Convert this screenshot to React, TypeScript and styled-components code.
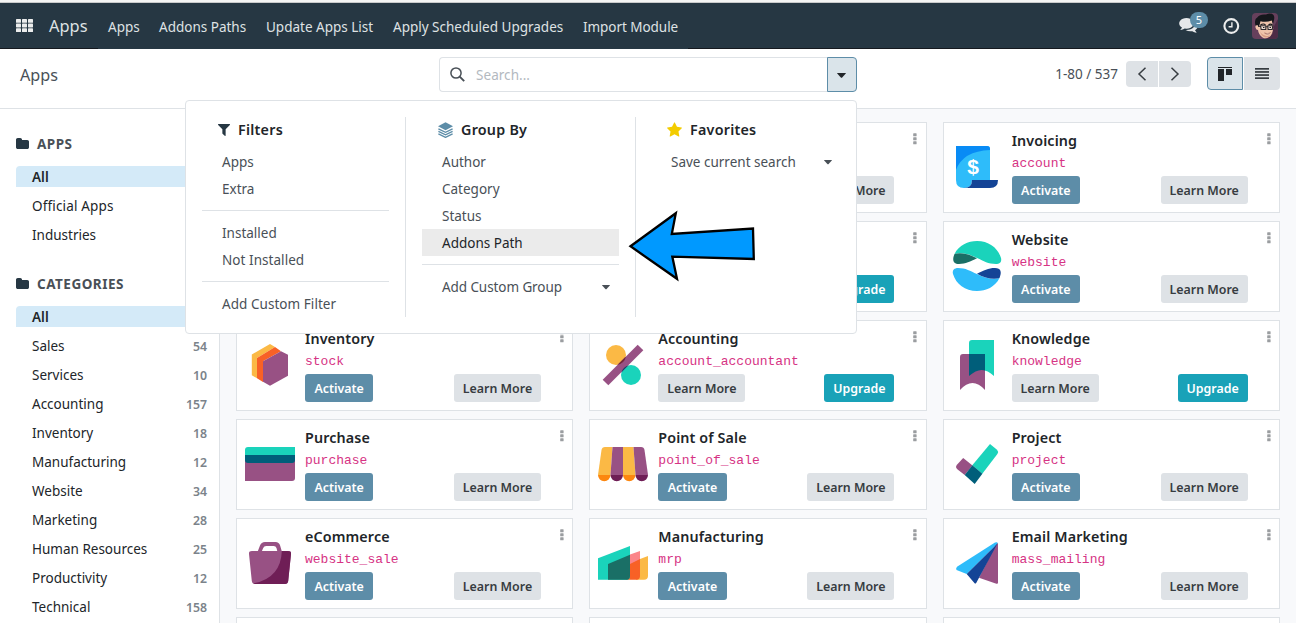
import React from "react";
import styled, { createGlobalStyle, css } from "styled-components";

const Global = createGlobalStyle`
  * { box-sizing: border-box; }
  body {
    margin: 0;
    overflow: hidden;
    background: #fff;
    color: #212529;
    font-family: "Noto Sans", "Open Sans", sans-serif;
    font-size: 13.5px;
    line-height: 21px;
  }
  svg { display: block; flex: none; }
`;

const Page = styled.div`
  position: relative;
  display: flex;
  flex-direction: column;
  height: 623px;
  overflow: hidden;
`;

const WindowEdge = styled.div`
  height: 3px;
  flex: none;
  background: #f4f4f4;
  border-bottom: 1px solid #c9cacb;
`;

/* A run of text that takes a set width, with its own letter spacing. */
const Label = styled.span<{ $w?: number; $track?: number }>`
  display: inline-block;
  white-space: nowrap;
  ${(p) => p.$w !== undefined && css`width: ${p.$w}px;`}
  letter-spacing: ${(p) => p.$track ?? 0}px;
`;

/* ---------- Top bar ---------- */

const Navbar = styled.nav`
  display: flex;
  flex: none;
  align-items: center;
  height: 46px;
  padding: 0 18px 0 16px;
  color: #dfe2e4;
  background:
    linear-gradient(#15191f, #15191f) 0 100% / 98px 1px no-repeat,
    linear-gradient(#15191f, #15191f) 688px 100% / 608px 1px no-repeat,
    #263743;
`;

const Brand = styled.div`
  width: 59px;
  margin-left: 16px;
  padding-bottom: 1px;
  font-size: 16.4px;
  line-height: 24px;
`;

const NavLinks = styled.div`
  display: flex;
  gap: 20px;
  padding-top: 3px;
`;

const Systray = styled.div`
  display: flex;
  align-items: center;
  margin-left: auto;
`;

const ChatButton = styled.div`
  position: relative;
  width: 44px;
`;

const Badge = styled.span`
  position: absolute;
  top: -6px;
  left: 11px;
  width: 18px;
  height: 16px;
  border-radius: 8px;
  background: #5d8da8;
  color: #fff;
  font-size: 11px;
  line-height: 16px;
  text-align: center;
`;

const ClockSlot = styled.div`
  width: 29px;
`;

/* ---------- Control panel ---------- */

const ControlPanel = styled.header`
  display: flex;
  flex: none;
  align-items: flex-start;
  height: 60px;
  padding: 8px 16px 0 20px;
  border-bottom: 1px solid #dee2e6;
  background: #fff;
  color: #495057;
`;

const Breadcrumb = styled.div`
  width: 419px;
  padding-top: 7px;
  font-size: 16.2px;
  line-height: 22px;
`;

const SearchBox = styled.div`
  display: flex;
  width: 418px;
  height: 35px;
`;

const SearchInput = styled.div`
  display: flex;
  flex: 1;
  align-items: center;
  gap: 11px;
  padding-left: 10px;
  border: 1px solid #dee2e6;
  border-right: 0;
  border-radius: 4px 0 0 4px;
  color: #b3b9bf;

  span { padding-top: 2px; }
`;

const SearchToggle = styled.div`
  display: flex;
  align-items: center;
  justify-content: center;
  width: 30px;
  padding: 1px 1px 0 0;
  border: 1px solid #5d8da8;
  border-radius: 0 4px 4px 0;
  background: #dae4ea;
`;

const Pager = styled.div`
  display: flex;
  align-items: center;
  margin: 4px 16px 0 auto;
  height: 26px;
`;

const PagerButton = styled.div<{ $side: "left" | "right" }>`
  display: flex;
  align-items: center;
  justify-content: center;
  width: 32px;
  height: 26px;
  background: #dee2e6;
  ${(p) =>
    p.$side === "left"
      ? css`margin: 0 1px 0 8px; border-radius: 4px 0 0 4px;`
      : css`border-radius: 0 4px 4px 0;`}
`;

const ViewButton = styled.div<{ $active?: boolean }>`
  display: flex;
  align-items: center;
  justify-content: center;
  width: 36px;
  height: 33px;
  background: #dee2e6;
  border-radius: 0 4px 4px 0;
  ${(p) =>
    p.$active &&
    css`
      margin-right: 1px;
      border: 1px solid #5d8da8;
      border-radius: 4px 0 0 4px;
      background: #dae4ea;
    `}
`;

/* ---------- Body ---------- */

const Body = styled.main`
  display: flex;
  flex: 1;
  min-height: 0;
  background: #f8f9fb;
`;

const Sidebar = styled.aside`
  flex: none;
  width: 220px;
  overflow: hidden;
  padding: 25px 0 0 16px;
  border-right: 1px solid #dee2e6;
  background: #fff;
`;

const SidebarSection = styled.section`
  margin-bottom: 29px;
`;

const SectionTitle = styled.h2`
  display: flex;
  align-items: center;
  gap: 8px;
  height: 20px;
  margin: 0 0 12px;
  padding-bottom: 1px;
  color: #495057;
  font-size: 13.5px;
  font-weight: 700;
  letter-spacing: 0.5px;
  line-height: 20px;
`;

const SidebarItem = styled.div<{ $active?: boolean }>`
  display: flex;
  align-items: center;
  justify-content: space-between;
  height: 21px;
  margin-bottom: 8px;
  padding: 2px 12px 0 16px;
  border-radius: 4px 0 0 0;
  ${(p) => p.$active && css`background: #d4eaf8; font-weight: 600;`}
`;

const Count = styled.span`
  color: #7b838a;
  font-size: 12.3px;
  font-weight: 600;
`;

const CardGrid = styled.div`
  display: grid;
  flex: 1;
  grid-template-columns: repeat(3, 1fr);
  grid-auto-rows: 91px;
  gap: 8px 16px;
  overflow: hidden;
  padding: 13px 16px 0;
`;

const Card = styled.article`
  display: flex;
  padding: 7px 8px 0;
  border: 1px solid #dee2e6;
  background: #fff;
`;

const CardIcon = styled.div`
  width: 50px;
  height: 50px;
  margin: 12px 10px 0 0;
`;

const CardContent = styled.div`
  flex: 1;
  min-width: 0;
`;

const CardTitle = styled.h3`
  height: 22px;
  margin: 0;
  font-size: 14.3px;
  font-weight: 600;
  letter-spacing: 0.12px;
  line-height: 22px;
`;

const TechnicalName = styled.code`
  display: block;
  height: 24px;
  color: #d63384;
  font-family: "Liberation Mono", monospace;
  font-size: 13px;
  line-height: 24px;
`;

const CardActions = styled.div`
  display: flex;
  justify-content: space-between;
`;

const CardMenu = styled.div`
  width: 23.35px;
  padding: 3px 0 0 18.9px;
`;

type Tone = "activate" | "learn" | "upgrade";

const buttonTones: Record<Tone, { w: number; bg: string; fg: string }> = {
  activate: { w: 68.3, bg: "#5d8da8", fg: "#fff" },
  learn: { w: 87, bg: "#dee2e6", fg: "#373c41" },
  upgrade: { w: 70, bg: "#19a2b8", fg: "#fff" },
};

const Button = styled.button<{ $tone: Tone }>`
  width: ${(p) => buttonTones[p.$tone].w}px;
  height: 28px;
  padding: 2px 0 0;
  border: 0;
  border-radius: 3px;
  background: ${(p) => buttonTones[p.$tone].bg};
  color: ${(p) => buttonTones[p.$tone].fg};
  font-family: inherit;
  font-size: 12.4px;
  font-weight: 600;
  line-height: 26px;
  white-space: nowrap;
`;

/* ---------- Search menu ---------- */

const SearchMenu = styled.div`
  position: absolute;
  top: 100px;
  left: 185px;
  display: flex;
  width: 672px;
  height: 234px;
  padding: 16px 0;
  border: 1px solid #dee2e6;
  border-radius: 4px;
  background: #fff;
  color: #495057;
`;

const MenuColumn = styled.div<{ $w: number; $left?: number; $right?: number }>`
  width: ${(p) => p.$w}px;
  padding: 0 ${(p) => p.$right ?? 16}px 0 ${(p) => p.$left ?? 16}px;
  & + & { border-left: 1px solid #dee2e6; }
`;

const MenuTitle = styled.h4`
  display: flex;
  align-items: center;
  gap: 8px;
  height: 26px;
  margin: 0 0 5px;
  padding: 0 0 1px 16px;
  color: #212529;
  font-size: 14.3px;
  font-weight: 600;
  letter-spacing: 0.25px;
`;

const MenuItem = styled.div<{ $active?: boolean }>`
  display: flex;
  align-items: center;
  justify-content: space-between;
  height: 27px;
  padding: 2px 9px 0 20px;
  ${(p) => p.$active && css`background: #ebebeb; color: #212529;`}
`;

const MenuDivider = styled.hr`
  height: 1px;
  margin: 8px 0;
  border: 0;
  background: #dee2e6;
`;

const Pointer = styled.svg`
  position: absolute;
  top: 206px;
  left: 624px;
`;

/* ---------- Small icons ---------- */

const Caret = ({ w = 8, color = "#495057" }: { w?: number; color?: string }) => (
  <svg width={w} height={w / 2 + 0.5} viewBox="0 0 8 4.4">
    <path d="M0.4 0h7.2q.6 0 .2.5L4.4 4.1q-.4.4-.8 0L.2.5Q-.2 0 .4 0z" fill={color} />
  </svg>
);

const FolderIcon = () => (
  <svg width="13" height="11" viewBox="0 128 1664 1408">
    <path
      fill="#263743"
      d="M1664 608v704q0 92-66 158t-158 66h-1216q-92 0-158-66t-66-158v-960q0-92 66-158t158-66h320q92 0 158 66t66 158v32h672q92 0 158 66t66 158z"
    />
  </svg>
);

const FilterIcon = () => (
  <svg width="12" height="12" viewBox="0 0 1408 1408">
    <path
      fill="#263743"
      d="M1403 39q17 41-14 70l-493 493v742q0 42-39 59-13 5-25 5-27 0-45-19l-256-256q-19-19-19-45v-486l-493-493q-31-29-14-70 17-39 59-39h1280q42 0 59 39z"
    />
  </svg>
);

const GroupIcon = () => (
  <svg width="15" height="16" viewBox="0 0 15 16" fill="none">
    <path d="M7.5.3 15 4.3 7.5 8.300 0 4.300z" fill="#5d8da8" />
    <path d="M.4 6.900 7.500 10.400l7.100-3.500M.4 9.400l7.100 3.500 7.100-3.500M.4 11.900l7.100 3.500 7.100-3.500" stroke="#5d8da8" strokeWidth="1.3" />
  </svg>
);

const StarIcon = () => (
  <svg width="15" height="15" viewBox="0 0 1664 1664">
    <path
      fill="#f3cc00"
      d="M1664 647q0 22-26 48l-363 354 86 500q1 7 1 20 0 21-10.500 35.500t-30.500 14.500q-19 0-40-12l-449-236-449 236q-22 12-40 12-21 0-31.500-14.500t-10.500-35.500q0-6 2-20l86-500-364-354q-25-27-25-48 0-37 56-46l502-73 225-455q19-41 49-41t49 41l225 455 502 73q56 9 56 46z"
    />
  </svg>
);

const AppsGridIcon = () => (
  <svg width="17" height="14" viewBox="0 0 17 14" fill="#eceded">
    {[0, 1, 2].map((r) =>
      [0, 1, 2].map((c) => <rect key={`${r}${c}`} x={c * 6} y={r * 4.600} width="5" height="3.800" rx="0.6" />)
    )}
  </svg>
);

const CommentsIcon = () => (
  <svg width="19" height="16" viewBox="0 128 1792 1536">
    <path
      fill="#e6e8ea"
      d="M1408 640q0 139-94 257t-256.500 186.500-353.500 68.500q-86 0-176-16-124 88-278 128-36 9-86 16h-3q-11 0-20.500-8t-11.500-21q-1-3-1-6.500t.5-6.500 2-6l2.500-5 3.500-5.500 4-5 4.500-5 4-4.500q5-6 23-25t26-29.500 22.500-29 25-38.500 20.500-44q-124-72-195-177t-71-224q0-139 94-257t256.500-186.500 353.500-68.500 353.500 68.500 256.500 186.500 94 257zm384 256q0 120-71 224.500t-195 176.500q10 24 20.500 44t25 38.500 22.500 29 26 29.500 23 25q1 1 4 4.500t4.500 5 4 5 3.500 5.500l2.500 5 2 6 .5 6.500-1 6.500q-3 14-13 22t-22 7q-50-7-86-16-154-40-278-128-90 16-176 16-271 0-472-132 58 4 88 4 161 0 309-45t264-129q125-92 192-212t67-254q0-77-23-152 129 71 204 178t75 230z"
    />
  </svg>
);

const ClockIcon = () => (
  <svg width="17" height="17" viewBox="0 0 17 17" fill="none" stroke="#eceded">
    <circle cx="8.300" cy="8" r="6.900" strokeWidth="2.100" />
    <path d="M8.900 4.200v4.500H5.600" strokeWidth="1.400" />
  </svg>
);

const Avatar = () => (
  <svg width="26" height="26" viewBox="0 0 26 26">
    <defs>
      <clipPath id="avatar-frame"><rect width="26" height="26" rx="4" /></clipPath>
    </defs>
    <g clipPath="url(#avatar-frame)">
      <rect width="26" height="26" fill="#66405c" />
      <path d="M26 6v20H15z" fill="#4d2c46" />
      <path d="M5 12q-2 0-1.500 2.500T6 17q.6 5 4.600 7.400Q14 26.600 18 23.500q2.600-2.500 3.200-8L20 7 8 8z" fill="#efc4ab" />
      <path d="M8 18q1 5 5 6.500 5 .5 7.500-5L20 21q-3 3-7 1.500T8 18z" fill="#d79d86" />
      <path d="M3.500 12.500Q1.800 6 5.500 4.200 8 .8 14 1.500 19-.5 21.500 2q1.500 2 .2 6.200L21 11l-1.300-3.500Q14 9.800 8.500 8.200 7.800 12 6.500 14l-1-2z" fill="#15171c" />
      <path d="M8.500 11.800q3-1.600 5 0M16.500 11.800q2-1.400 4 0" stroke="#15171c" strokeWidth="1.200" fill="none" />
      <path d="M8.500 12.800h5.300v3.700H9.200zM15.800 12.800h5l-.6 3.700h-4.100zM13.800 13.700h2M6 13.200l2.500.3" stroke="#2b292d" strokeWidth="1.100" fill="#f2ded3" />
      <path d="M11 14.500h1.500M17.500 14.500H19" stroke="#222" strokeWidth="1.200" />
      <path d="M12.500 20q3 1.700 6-.5-2.500 3.500-6 .5z" fill="#fff" stroke="#99594e" strokeWidth=".5" />
    </g>
  </svg>
);

const SearchIcon = () => (
  <svg width="15" height="15" viewBox="0 0 15 15" fill="none" stroke="#495057">
    <circle cx="6" cy="6" r="5.100" strokeWidth="1.500" />
    <path d="M9.700 9.700 14.200 14.200" strokeWidth="1.900" />
  </svg>
);

const Chevron = ({ d }: { d: string }) => (
  <svg width="10" height="14" viewBox="0 0 10 14" fill="none" stroke="#373c41" strokeWidth="1.500">
    <path d={d} />
  </svg>
);

const KanbanIcon = () => (
  <svg width="14" height="14" viewBox="0 0 14 14" fill="#212529">
    <rect width="14" height="1" />
    <rect y="2" width="6" height="12" />
    <rect x="8" y="2" width="6" height="6" />
  </svg>
);

const ListIcon = () => (
  <svg width="14" height="11" viewBox="0 0 14 11" fill="#373c41">
    {[0, 3.100, 6.200, 9.300].map((y) => <rect key={y} y={y} width="14" height="1.700" />)}
  </svg>
);

const KebabIcon = () => (
  <svg width="4" height="12" viewBox="0 0 4 12" fill="#9a9da0">
    {[0, 4, 8].map((y) => <rect key={y} x="0.200" y={y + 0.200} width="3.400" height="3.100" rx="0.600" />)}
  </svg>
);

/* ---------- App icons, each on a 50 x 50 canvas ---------- */

const appIcons: Record<string, React.ReactNode> = {
  account: (
    <>
      <path d="M4 4H35a3 3 0 0 1 3 3V38H20q0 8-8 8-8 0-8-8z" fill="#2ebcfa" />
      <path d="M4 4H35a3 3 0 0 1 3 3v1Q11 9 4 28z" fill="#088bf5" />
      <path d="M20 38H46q0 8-8 8H12q8 0 8-8z" fill="#144496" />
      <text x="21" y="32" fill="#fff" textAnchor="middle" fontFamily="Liberation Sans" fontWeight="700" fontSize="21">$</text>
    </>
  ),
  website: (
    <>
      <path d="M2.500 13C7 4 16 0 25 0c12 0 21 7 24 17 1 4-1.500 6-5 6-8 0-12-3-19-6-8-4-15-6-22.500-4z" fill="#1ad3bb" />
      <path d="M2.500 13C9 11 17 13 25 17.300 18 20.500 14 23 7 23c-6 0-7-4-4.500-10z" fill="#1a6f66" />
      <path d="M1 33c-1-4 1.500-6 5-6 8 0 12 3 19 6 8 4 15 6 22.500 4C43 46 34 50 25 50 13 50 4 43 1 33z" fill="#2ebcfa" />
      <path d="M47.500 37C41 39 33 37 25 32.700 32 29.500 36 27 43 27c6 0 7 4 4.500 10z" fill="#144496" />
    </>
  ),
  knowledge: (
    <>
      <path d="M20 0H42V36Q29.500 24 17 36V3a3 3 0 0 1 3-3z" fill="#1ad3bb" />
      <path d="M11 14H33V50Q20.500 36 8 50V17a3 3 0 0 1 3-3z" fill="#985184" />
      <path d="M17 14H33v16.500Q26 28 17 36z" fill="#005e7a" />
    </>
  ),
  stock: (
    <>
      <path d="M25 4l5 3-18 11v20.300l-5.200-3V14.500z" fill="#fbb945" />
      <path d="M30 7l6 4.300-18 10v20.600L12 38.300V18z" fill="#f86126" />
      <path d="M36 11.300l7 3.400v21L25 45.700l-7-4V21.300z" fill="#985184" />
    </>
  ),
  account_accountant: (
    <>
      <defs>
        <clipPath id="acc-dots-a"><circle cx="18" cy="15" r="10" /></clipPath>
        <clipPath id="acc-dots-b"><circle cx="33" cy="35" r="10" /></clipPath>
        <clipPath id="acc-core"><rect x="19" y="17" width="12" height="16" /></clipPath>
      </defs>
      <circle cx="18" cy="15" r="10" fill="#fbb945" />
      <circle cx="33" cy="35" r="10" fill="#1ad3bb" />
      <path d="M7.500 42.500 42.500 7.500" stroke="#985184" strokeWidth="8" />
      <g clipPath="url(#acc-core)">
        <path d="M7.500 42.500 42.500 7.500" stroke="#75283c" strokeWidth="8" clipPath="url(#acc-dots-a)" />
        <path d="M7.500 42.500 42.500 7.500" stroke="#17416b" strokeWidth="8" clipPath="url(#acc-dots-b)" />
      </g>
    </>
  ),
  purchase: (
    <>
      <path d="M0 16h50v23a3 3 0 0 1-3 3H0z" fill="#985184" />
      <path d="M3 8h47v8H0v-5a3 3 0 0 1 3-3z" fill="#1ad3bb" />
      <path d="M0 16h50v5a3 3 0 0 1-3 3H3a3 3 0 0 1-3-3z" fill="#005e7a" />
    </>
  ),
  point_of_sale: (
    <>
      <path d="M7 8h7.500l-2 28H0L3.500 11Q4 8 7 8z" fill="#fbb945" />
      <path d="M14.500 8H25v28H12.500z" fill="#985184" />
      <path d="M25 8h10.500l2 28H25z" fill="#fbb945" />
      <path d="M35.500 8H43q3 0 3.500 3L50 36H37.500z" fill="#985184" />
      <path d="M0 36h12.500a6.250 6.250 0 0 1-12.500 0zM25 36h12.500a6.250 6.250 0 0 1-12.500 0z" fill="#fc8710" />
      <path d="M12.500 36H25a6.250 6.250 0 0 1-12.500 0zM37.500 36H50a6.250 6.250 0 0 1-12.500 0z" fill="#6f1e56" />
    </>
  ),
  project: (
    <>
      <path d="M11.200 19 20.500 26.500 12.700 36 5 30q-2-2-.3-4z" fill="#985184" />
      <path d="M38 5l7 5.700q2 2 .4 4.200L30.300 34.700l-10-8.400z" fill="#1ad3bb" />
      <path d="M20.400 26.300l10 8.400L22.700 45l-10-9z" fill="#005e7a" />
    </>
  ),
  website_sale: (
    <>
      <path d="M12.500 14 15 7.500Q16.300 4 20 4h10.500q3.600 0 4.600 3.500L37 14h-4.500l-1-4q-.7-2-2.800-2h-7.500q-2.200 0-3 2L16.500 14z" fill="#985184" />
      <path d="M7 13h36q3.400 0 3 3l-2.800 27q-.4 3-3.200 3H10q-2.800 0-3.200-3L4 16q-.4-3 3-3z" fill="#985184" />
      <path d="M36.800 13H43q3.400 0 3 3l-2.800 27q-.4 3-3.200 3H10q-1 0-1.700-.5Q36 40 36.800 13z" fill="#6f1e56" />
    </>
  ),
  mrp: (
    <>
      <path d="M42 21l8-3v20q0 3.700-4 3.700h-8z" fill="#fbb945" />
      <path d="M32 16.500 42 13v10l-10 5z" fill="#fb8589" />
      <path d="M32 26l10-5v17q0 3.700-3.500 3.700H28z" fill="#f86126" />
      <path d="M0 20.300 32 8v30q0 3.700-3.500 3.700H0z" fill="#1ad3bb" />
      <path d="M10 26l22-9.200V38q0 3.700-3.500 3.700H10z" fill="#1a6f66" />
    </>
  ),
  mass_mailing: (
    <>
      <path d="M46 5v39.500q0 1.700-1.600 1.200L27 39.700 44 6z" fill="#985184" />
      <path d="M5 28.700 43 4.600q3-1.300 2.500 1L14.700 36 4.500 32q-1-1.600.5-3.300z" fill="#2ebcfa" />
      <path d="M14.700 36 45.500 5.500 24.200 45q-.8 1.200-1.800 0z" fill="#144496" />
    </>
  ),
};

/* ---------- Data ---------- */

const navItems: [string, number, number][] = [
  ["Apps", 31, 0],
  ["Addons Paths", 87, 0],
  ["Update Apps List", 107, 0],
  ["Apply Scheduled Upgrades", 170, 0],
  ["Import Module", 95, -0.05],
];

const categories: [string, string][] = [
  ["Sales", "54"],
  ["Services", "10"],
  ["Accounting", "157"],
  ["Inventory", "18"],
  ["Manufacturing", "12"],
  ["Website", "34"],
  ["Marketing", "28"],
  ["Human Resources", "25"],
  ["Productivity", "12"],
  ["Technical", "158"],
];

interface AppEntry {
  title?: string;
  name?: string;
  actions?: Tone[];
}

const both: Tone[] = ["activate", "learn"];
const upgradable: Tone[] = ["learn", "upgrade"];

const apps: AppEntry[] = [
  {},
  { actions: both },
  { title: "Invoicing", name: "account", actions: both },
  {},
  { actions: upgradable },
  { title: "Website", name: "website", actions: both },
  { title: "Inventory", name: "stock", actions: both },
  { title: "Accounting", name: "account_accountant", actions: upgradable },
  { title: "Knowledge", name: "knowledge", actions: upgradable },
  { title: "Purchase", name: "purchase", actions: both },
  { title: "Point of Sale", name: "point_of_sale", actions: both },
  { title: "Project", name: "project", actions: both },
  { title: "eCommerce", name: "website_sale", actions: both },
  { title: "Manufacturing", name: "mrp", actions: both },
  { title: "Email Marketing", name: "mass_mailing", actions: both },
  {},
  {},
  {},
];

const actionText: Record<Tone, string> = {
  activate: "Activate",
  learn: "Learn More",
  upgrade: "Upgrade",
};

const AppCard = ({ title, name, actions }: AppEntry) => (
  <Card>
    {actions && (
      <>
        <CardIcon>
          {name && <svg width="50" height="50" viewBox="0 0 50 50">{appIcons[name]}</svg>}
        </CardIcon>
        <CardContent>
          <CardTitle>{title}</CardTitle>
          <TechnicalName>{name}</TechnicalName>
          <CardActions>
            {actions.map((a) => <Button key={a} $tone={a}>{actionText[a]}</Button>)}
          </CardActions>
        </CardContent>
        <CardMenu><KebabIcon /></CardMenu>
      </>
    )}
  </Card>
);

export default function App() {
  return (
    <Page>
      <Global />
      <WindowEdge />
      <Navbar>
        <AppsGridIcon />
        <Brand>Apps</Brand>
        <NavLinks>
          {navItems.map(([text, w, track]) => (
            <Label key={text} $w={w} $track={track}>{text}</Label>
          ))}
        </NavLinks>
        <Systray>
          <ChatButton>
            <CommentsIcon />
            <Badge>5</Badge>
          </ChatButton>
          <ClockSlot><ClockIcon /></ClockSlot>
          <Avatar />
        </Systray>
      </Navbar>

      <ControlPanel>
        <Breadcrumb>Apps</Breadcrumb>
        <SearchBox>
          <SearchInput>
            <SearchIcon />
            <Label $track={0.05}>Search...</Label>
          </SearchInput>
          <SearchToggle><Caret w={9} color="#212529" /></SearchToggle>
        </SearchBox>
        <Pager>
          <Label>1-80 / 537</Label>
          <PagerButton $side="left"><Chevron d="M8.500 0.700 2 7l6.500 6.300" /></PagerButton>
          <PagerButton $side="right"><Chevron d="M1.500 0.700 8 7l-6.500 6.300" /></PagerButton>
        </Pager>
        <ViewButton $active><KanbanIcon /></ViewButton>
        <ViewButton><ListIcon /></ViewButton>
      </ControlPanel>

      <Body>
        <Sidebar>
          <SidebarSection>
            <SectionTitle><FolderIcon />APPS</SectionTitle>
            <SidebarItem $active>All</SidebarItem>
            <SidebarItem><Label $track={0.15}>Official Apps</Label></SidebarItem>
            <SidebarItem>Industries</SidebarItem>
          </SidebarSection>
          <SidebarSection>
            <SectionTitle><FolderIcon />CATEGORIES</SectionTitle>
            <SidebarItem $active>All</SidebarItem>
            {categories.map(([text, n]) => (
              <SidebarItem key={text}>
                <Label>{text}</Label>
                <Count>{n}</Count>
              </SidebarItem>
            ))}
          </SidebarSection>
        </Sidebar>
        <CardGrid>
          {apps.map((app, i) => <AppCard key={i} {...app} />)}
        </CardGrid>
      </Body>

      <SearchMenu>
        <MenuColumn $w={219}>
          <MenuTitle><FilterIcon />Filters</MenuTitle>
          <MenuItem>Apps</MenuItem>
          <MenuItem>Extra</MenuItem>
          <MenuDivider />
          <MenuItem>Installed</MenuItem>
          <MenuItem><Label $track={0.05}>Not Installed</Label></MenuItem>
          <MenuDivider />
          <MenuItem><Label $track={0.05}>Add Custom Filter</Label></MenuItem>
        </MenuColumn>
        <MenuColumn $w={230}>
          <MenuTitle><GroupIcon />Group By</MenuTitle>
          <MenuItem>Author</MenuItem>
          <MenuItem>Category</MenuItem>
          <MenuItem>Status</MenuItem>
          <MenuItem $active>Addons Path</MenuItem>
          <MenuDivider />
          <MenuItem><Label $track={-0.08}>Add Custom Group</Label><Caret /></MenuItem>
        </MenuColumn>
        <MenuColumn $w={221} $left={15} $right={15}>
          <MenuTitle><StarIcon />Favorites</MenuTitle>
          <MenuItem>Save current search<Caret /></MenuItem>
        </MenuColumn>
      </SearchMenu>

      <Pointer width="136" height="80" viewBox="624 206 136 80">
        <path
          d="M630.500 246.300 675.800 213.200 671.800 234 753 228.500 753.800 259 672.300 256.600 677 278.800z"
          fill="#0099ff"
          stroke="#000"
          strokeWidth="2.300"
        />
      </Pointer>
    </Page>
  );
}
